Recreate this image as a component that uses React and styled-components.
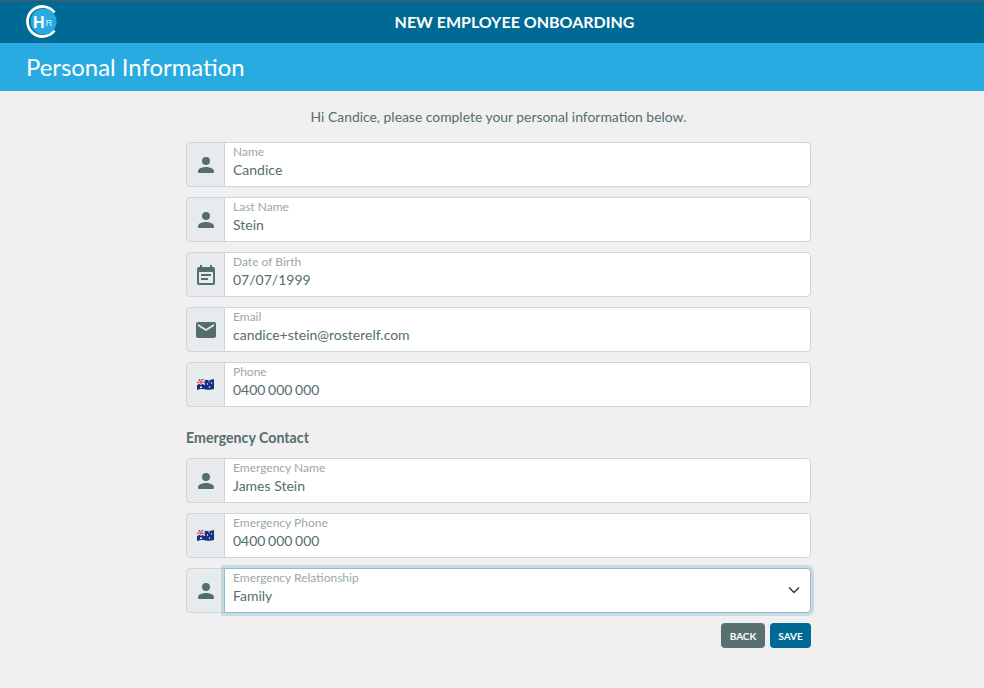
import React from "react";
import styled, { createGlobalStyle } from "styled-components";

const Global = createGlobalStyle`
  html, body { margin: 0; padding: 0; background: #f0f0f0; }
  body { font-family: Lato, "Liberation Sans", sans-serif; color: #546e6e; }
  * { box-sizing: border-box; }
`;
const Page = styled.div`width: 984px; height: 688px; overflow: hidden; background: #f0f0f0;`;
const TopBar = styled.header`
  position: relative; height: 43px; background: #006994; border-top: 1px solid #4a5a63;
  display: flex; align-items: center; justify-content: center;
`;
const TopTitle = styled.h1`
  margin: 0 0 0 45px; font-size: 16px; line-height: 20px; font-weight: 700; color: #fff;
`;
const LogoWrap = styled.div`position: absolute; left: 25px; top: 4px; width: 33px; height: 33px;`;
const Band = styled.div`
  height: 48px; background: #29abe2; padding-left: 26px; display: flex; align-items: center;
`;
const BandTitle = styled.h2`margin: 0; font-size: 23.900px; line-height: 48px; font-weight: 400; color: #fff;`;
const Content = styled.main`width: 625px; margin: 0 auto 0 186px; padding-top: 17px;`;
const Intro = styled.p`
  margin: 0 0 16px; height: 18px; font-size: 13.900px; line-height: 18px; text-align: center; color: #546e6e;
`;
const Fields = styled.div`display: flex; flex-direction: column; gap: 10px;`;
const Row = styled.div`display: flex; height: 45px;`;
const Addon = styled.div`
  width: 39px; flex: none; background: #e8ebee; border: 1px solid #ced4da; padding-top: 1px;
  border-radius: 4px 0 0 4px; display: flex; align-items: center; justify-content: center;
`;
const Field = styled.div`
  position: relative; flex: 1; background: #fff; margin-left: -1px; padding: 2px 0 0 8px;
  border: 1px solid ${p => (p.$focus ? "#8bbdd3" : "#ced4da")};
  border-radius: 0 4px 4px 0;
  box-shadow: ${p => (p.$focus ? "0 0 0 3px rgba(120,165,190,.3)" : "none")};
  z-index: ${p => (p.$focus ? 1 : 0)};
`;
const Label = styled.div`font-size: 12px; line-height: 14px; color: #9aa8a8;`;
const Value = styled.div`
  font-size: 14px; line-height: 18px; margin-top: 2px; color: #546e6e;
  word-spacing: ${p => (p.$tight ? "-1px" : "0")};
`;
const Chevron = styled.svg`position: absolute; right: 10px; top: 17px;`;
const SectionTitle = styled.h3`
  margin: 21px 0 10px; height: 20px; font-size: 14.200px; line-height: 20px; font-weight: 700; color: #546e6e;
`;
const Actions = styled.div`display: flex; justify-content: flex-end; gap: 5px; margin-top: 10px;`;
const Button = styled.button`
  height: 25px; padding: 0; width: ${p => p.$w}px; border: 0; border-radius: 4px;
  background: ${p => p.$bg}; color: #fff; font-family: inherit; font-size: 10px; font-weight: 700;
`;

const Person = () => (
  <svg width="24" height="24" viewBox="0 0 24 24" fill="#546e6e">
    <path d="M12 12a4 4 0 1 0 0-8 4 4 0 0 0 0 8zm0 2c-2.700 0-8 1.300-8 4v1a1 1 0 0 0 1 1h14a1 1 0 0 0 1-1v-1c0-2.700-5.300-4-8-4z" />
  </svg>
);
const Calendar = () => (
  <svg width="24" height="24" viewBox="0 0 24 24" fill="#546e6e">
    <path d="M19 4h-1V2h-2v2H8V2H6v2H5a2 2 0 0 0-2 2v14a2 2 0 0 0 2 2h14a2 2 0 0 0 2-2V6a2 2 0 0 0-2-2zm0 16H5V9h14v11zM7 11h10v2H7zm0 4h7v2H7z" />
  </svg>
);
const Mail = () => (
  <svg width="24" height="24" viewBox="0 0 24 24" fill="#546e6e">
    <path d="M20 4H4a2 2 0 0 0-2 2v12a2 2 0 0 0 2 2h16a2 2 0 0 0 2-2V6a2 2 0 0 0-2-2zm0 4-8 5-8-5V6l8 5 8-5v2z" />
  </svg>
);
const Flag = () => (
  <svg width="17" height="13" viewBox="0 1 17 13">
    <path d="M0 2C3 .7 5 1.100 8.500 1.700S14 2 17 1v10c-3 1-5 1-8.500.4S3 11 0 12z" fill="#12307e" />
    <path d="M0 2 8 6.500M8 1.800 0 6.500" stroke="#fff" strokeWidth="1.300" />
    <path d="M4 1.300v5.500M0 4.200h8" stroke="#fff" strokeWidth="2" />
    <path d="M4 1.300v5.500M0 4.200h8" stroke="#e0263c" strokeWidth="1" />
    <g fill="#fff">
      <circle cx="4" cy="9.300" r="1" />
      <circle cx="12" cy="3" r=".7" />
      <circle cx="14.500" cy="5" r=".7" />
      <circle cx="10.500" cy="6" r=".7" />
      <circle cx="12.500" cy="9" r=".8" />
    </g>
  </svg>
);
const Logo = () => (
  <svg width="33" height="33" viewBox="0 0 33 33">
    <path d="M29.500 25.500A15 15 0 1 1 29.500 7.500" fill="none" stroke="#fff" strokeWidth="2.800" />
    <circle cx="18.500" cy="16.500" r="13" fill="#29abe2" />
    <text x="8" y="23" fontFamily="Liberation Sans, sans-serif" fontSize="16" fontWeight="700" fill="#fff">H</text>
    <text x="20.500" y="21" fontFamily="Liberation Sans, sans-serif" fontSize="9.500" fill="#d5f0fb">R</text>
  </svg>
);

const InputRow = ({ icon, label, value, focus, select, tight }) => (
  <Row>
    <Addon>{icon}</Addon>
    <Field $focus={focus}>
      <Label>{label}</Label>
      <Value $tight={tight}>{value}</Value>
      {select && (
        <Chevron width="12" height="8" viewBox="0 0 12 8" fill="none" stroke="#343a40" strokeWidth="1.500">
          <path d="M1 1.500 6 6.500 11 1.500" />
        </Chevron>
      )}
    </Field>
  </Row>
);

export default function App() {
  return (
    <Page>
      <Global />
      <TopBar>
        <LogoWrap><Logo /></LogoWrap>
        <TopTitle>NEW EMPLOYEE ONBOARDING</TopTitle>
      </TopBar>
      <Band><BandTitle>Personal Information</BandTitle></Band>
      <Content>
        <Intro>Hi Candice, please complete your personal information below.</Intro>
        <Fields>
          <InputRow icon={<Person />} label="Name" value="Candice" />
          <InputRow icon={<Person />} label="Last Name" value="Stein" />
          <InputRow icon={<Calendar />} label="Date of Birth" value="07/07/1999" />
          <InputRow icon={<Mail />} label="Email" value="candice+stein@rosterelf.com" />
          <InputRow icon={<Flag />} label="Phone" value="0400 000 000" tight />
        </Fields>
        <SectionTitle>Emergency Contact</SectionTitle>
        <Fields>
          <InputRow icon={<Person />} label="Emergency Name" value="James Stein" />
          <InputRow icon={<Flag />} label="Emergency Phone" value="0400 000 000" tight />
          <InputRow icon={<Person />} label="Emergency Relationship" value="Family" focus select />
        </Fields>
        <Actions>
          <Button $w={44} $bg="#5a7070">BACK</Button>
          <Button $w={41} $bg="#006994">SAVE</Button>
        </Actions>
      </Content>
    </Page>
  );
}
